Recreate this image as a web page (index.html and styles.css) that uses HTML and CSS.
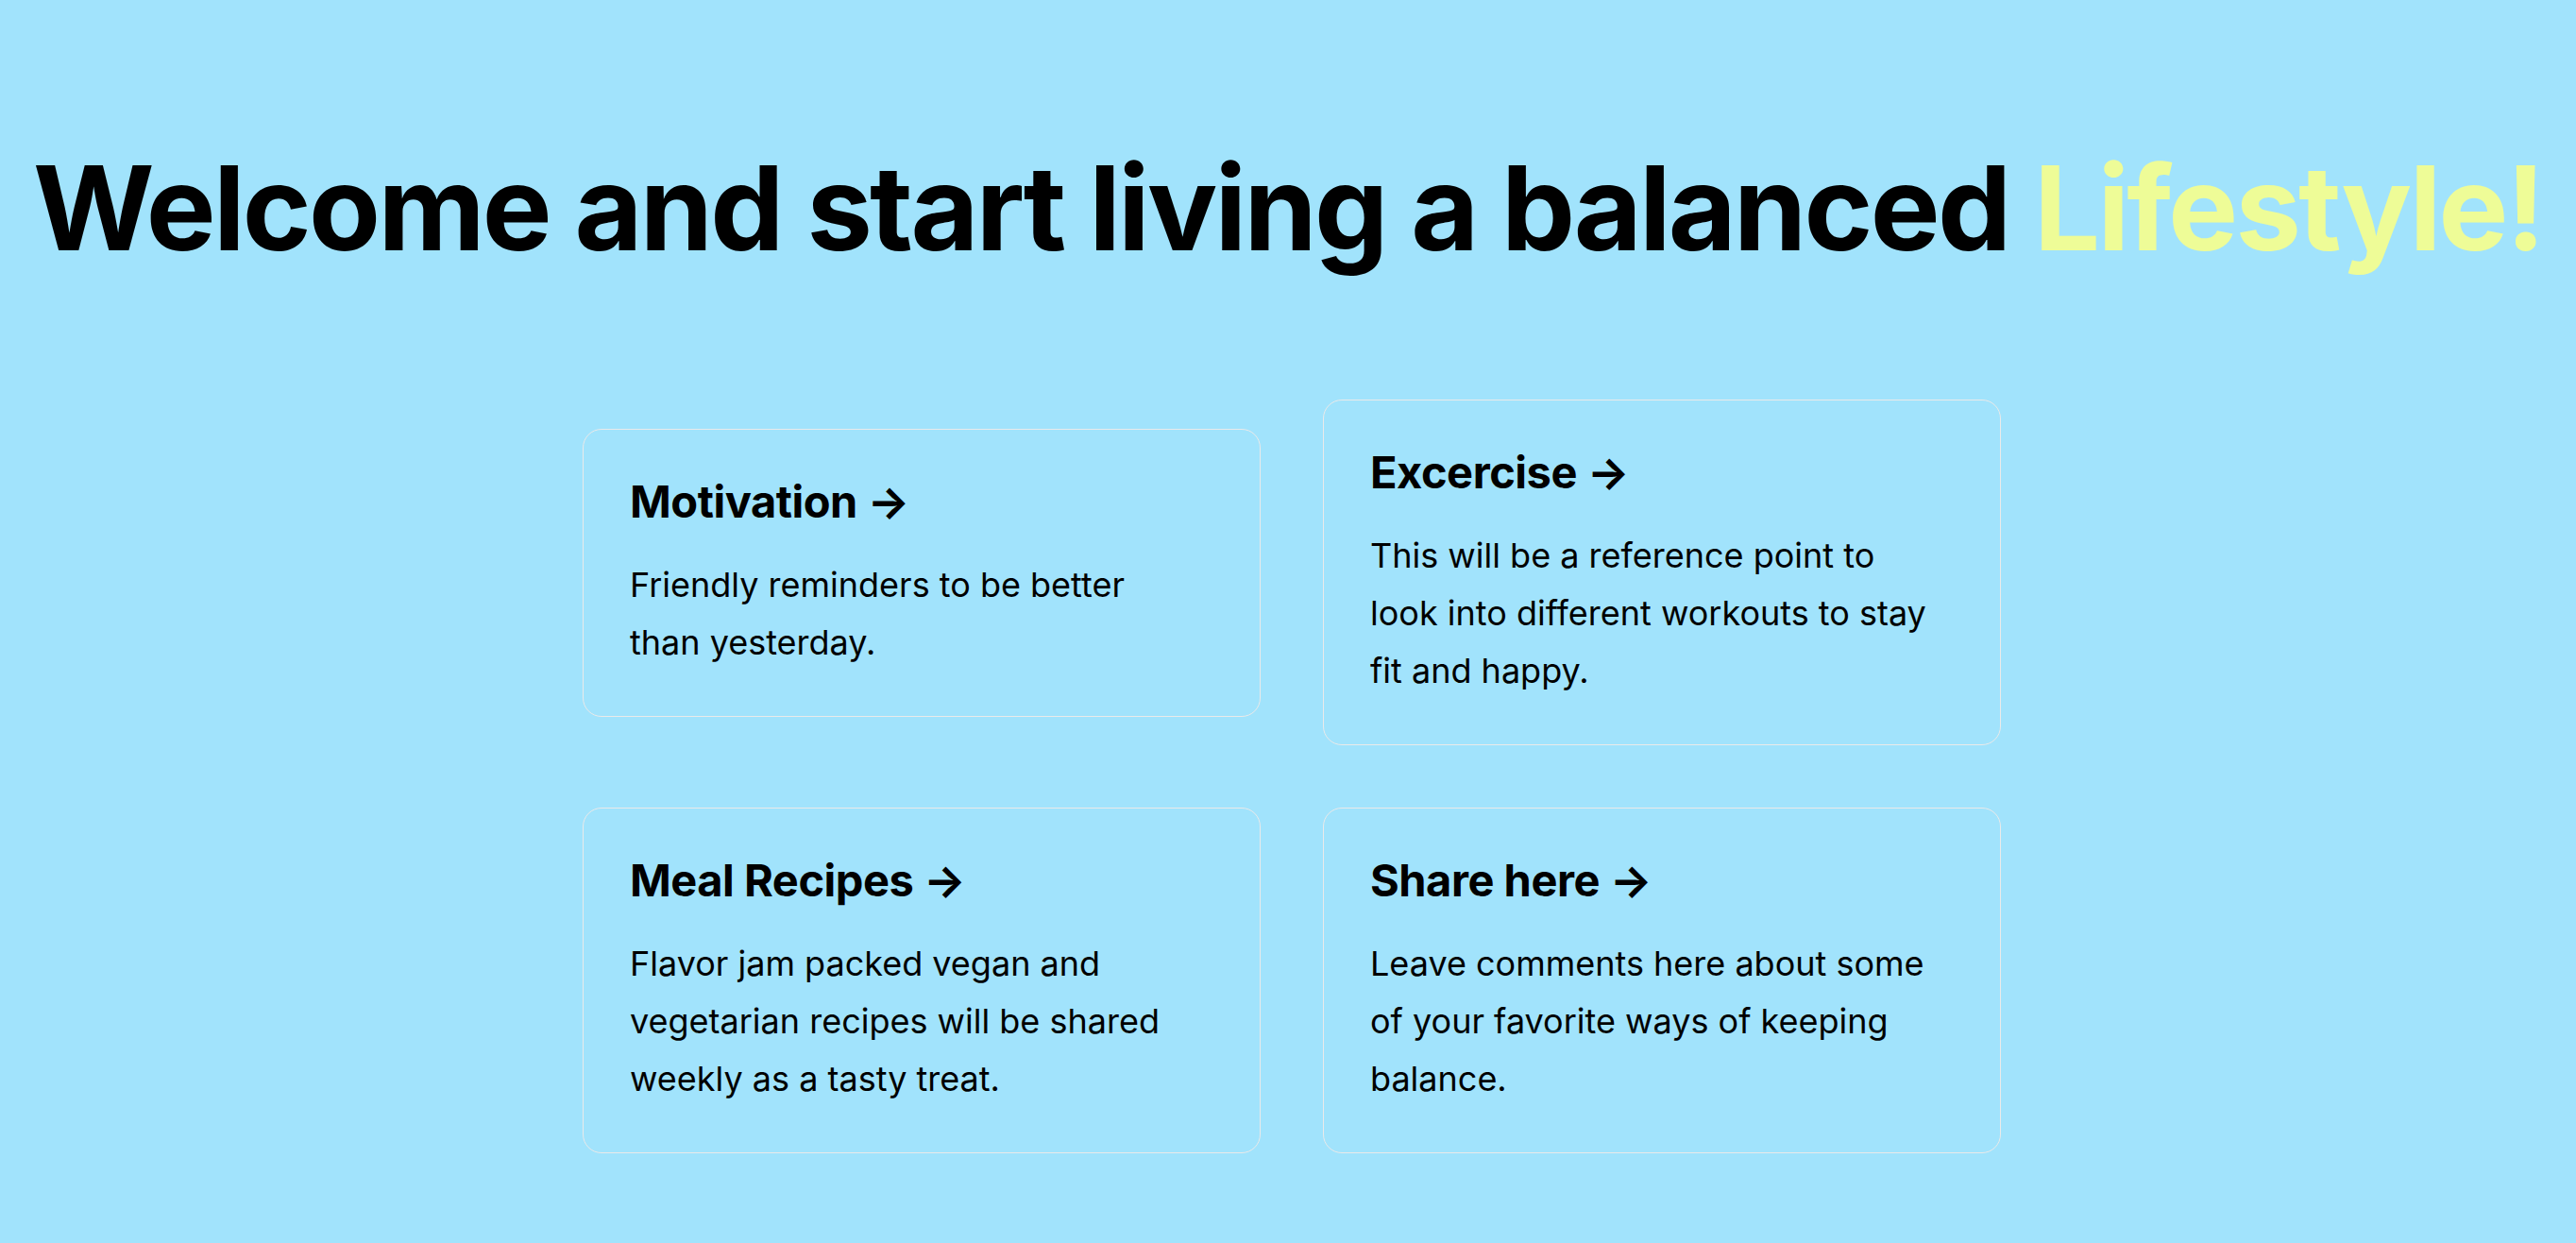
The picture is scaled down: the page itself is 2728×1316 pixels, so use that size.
FILE: index.html
```html
<!DOCTYPE html>
<html lang="en">
<head>
<meta charset="utf-8">
<title>Balanced Lifestyle</title>
<link rel="stylesheet" href="styles.css">
</head>
<body>
<main class="main">
  <h1 class="title">Welcome and start living a balanced <span class="accent">Lifestyle!</span></h1>
  <div class="grid">
    <a class="card" href="#">
      <h2>Motivation &rarr;</h2>
      <p>Friendly reminders to be better than yesterday.</p>
    </a>
    <a class="card" href="#">
      <h2>Excercise &rarr;</h2>
      <p>This will be a reference point to look into different workouts to stay fit and happy.</p>
    </a>
    <a class="card" href="#">
      <h2>Meal Recipes &rarr;</h2>
      <p>Flavor jam packed vegan and vegetarian recipes will be shared weekly as a tasty treat.</p>
    </a>
    <a class="card" href="#">
      <h2>Share here &rarr;</h2>
      <p>Leave comments here about some of your favorite ways of keeping balance.</p>
    </a>
  </div>
</main>
</body>
</html>
```
FILE: styles.css
```css
* { box-sizing: border-box; }
html, body {
  margin: 0;
  padding: 0;
  background: #a1e3fc;
  font-family: Inter, "Noto Sans", sans-serif;
  color: #000;
}
.main {
  min-height: 1316px;
  padding: 144px 0 0;
  display: flex;
  flex-direction: column;
  align-items: center;
}
.title {
  margin: 0;
  font-size: 124px;
  line-height: 152px;
  font-weight: 700;
  letter-spacing: -0.022em;
  text-align: center;
  white-space: nowrap;
}
.accent { color: #eefc97; }
.grid {
  margin-top: 94px;
  margin-left: 8px;
  width: 1568px;
  display: flex;
  flex-wrap: wrap;
  align-items: center;
  justify-content: center;
}
.card {
  margin: 33px;
  width: 718px;
  padding: 48px 59px 47px 49px;
  border: 1px solid #eaeaea;
  border-radius: 20px;
  color: inherit;
  text-decoration: none;
}
.card h2 {
  margin: 0 0 30px;
  font-size: 47px;
  line-height: 56px;
  font-weight: 700;
  letter-spacing: -0.01em;
}
.card p {
  margin: 0;
  font-size: 36px;
  line-height: 61px;
}
```
